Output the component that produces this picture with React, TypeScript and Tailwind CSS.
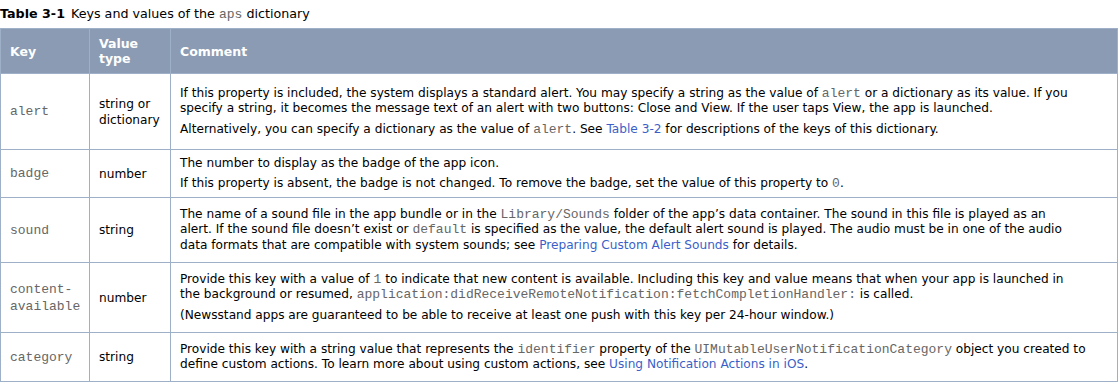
import React from "react";

const sans = "font-['DejaVu_Sans',sans-serif]";
const mono = "font-['Liberation_Mono',monospace] text-[#666666]";

function Code({ children }: { children: React.ReactNode }) {
  return <code className={`${mono} text-[13px]`}>{children}</code>;
}

function Link({ children }: { children: React.ReactNode }) {
  return <span className="text-[#3b5fc8]">{children}</span>;
}

function P({ children, last }: { children: React.ReactNode; last?: boolean }) {
  return <p className={`whitespace-nowrap leading-[15.5px] ${last ? "" : "mb-[5px]"}`}>{children}</p>;
}

const rows = [
  {
    key: "alert",
    type: ["string or", "dictionary"],
    h: "h-[76px]",
    body: (
      <>
        <P>
          If this property is included, the system displays a standard alert. You may specify a string as the value of <Code>alert</Code> or a dictionary as its value. If you
          <br />
          specify a string, it becomes the message text of an alert with two buttons: Close and View. If the user taps View, the app is launched.
        </P>
        <P last>
          Alternatively, you can specify a dictionary as the value of <Code>alert</Code>. See <Link>Table 3-2</Link> for descriptions of the keys of this dictionary.
        </P>
      </>
    ),
  },
  {
    key: "badge",
    type: ["number"],
    h: "h-[48px]",
    body: (
      <>
        <P>The number to display as the badge of the app icon.</P>
        <P last>
          If this property is absent, the badge is not changed. To remove the badge, set the value of this property to <Code>0</Code>.
        </P>
      </>
    ),
  },
  {
    key: "sound",
    type: ["string"],
    h: "h-[65px]",
    body: (
      <P last>
        The name of a sound file in the app bundle or in the <Code>Library/Sounds</Code> folder of the app’s data container. The sound in this file is played as an
        <br />
        alert. If the sound file doesn’t exist or <Code>default</Code> is specified as the value, the default alert sound is played. The audio must be in one of the audio
        <br />
        data formats that are compatible with system sounds; see <Link>Preparing Custom Alert Sounds</Link> for details.
      </P>
    ),
  },
  {
    key: "content-available",
    type: ["number"],
    h: "h-[70px]",
    body: (
      <>
        <P>
          Provide this key with a value of <Code>1</Code> to indicate that new content is available. Including this key and value means that when your app is launched in
          <br />
          the background or resumed, <Code>application:didReceiveRemoteNotification:fetchCompletionHandler:</Code> is called.
        </P>
        <P last>(Newsstand apps are guaranteed to be able to receive at least one push with this key per 24-hour window.)</P>
      </>
    ),
  },
  {
    key: "category",
    type: ["string"],
    h: "h-[49px]",
    body: (
      <P last>
        Provide this key with a string value that represents the <Code>identifier</Code> property of the <Code>UIMutableUserNotificationCategory</Code> object you created to
        <br />
        define custom actions. To learn more about using custom actions, see <Link>Using Notification Actions in iOS</Link>.
      </P>
    ),
  },
];

export default function App() {
  return (
    <div className={`w-[1120px] h-[383px] bg-white text-black text-[12.15px] ${sans}`}>
      <div className="h-[28px] pt-[6px] leading-[16px] text-[12.7px]">
        <span className="font-bold">Table 3-1</span>
        <span className="ml-[6px]">
          Keys and values of the <Code>aps</Code> dictionary
        </span>
      </div>
      <table className="w-[1118px] border-collapse table-fixed">
        <colgroup>
          <col className="w-[89px]" />
          <col className="w-[81px]" />
          <col />
        </colgroup>
        <thead>
          <tr className="h-[45px] bg-[#8a9bb3] text-white font-bold text-[12.5px] leading-[15px]">
            <th className="border border-[#9db0c8] text-left align-middle px-[9px]">Key</th>
            <th className="border border-[#9db0c8] text-left align-middle px-[9px]">
              Value
              <br />
              type
            </th>
            <th className="border border-[#9db0c8] text-left align-middle px-[9px]">Comment</th>
          </tr>
        </thead>
        <tbody>
          {rows.map((r) => (
            <tr key={r.key} className={r.h}>
              <td className="border border-[#9db0c8] align-middle px-[9px] leading-[16px]">
                {r.key === "content-available" ? (
                  <span className={`${mono} text-[13px]`}>
                    content-
                    <br />
                    available
                  </span>
                ) : (
                  <span className={`${mono} text-[13px]`}>{r.key}</span>
                )}
              </td>
              <td className="border border-[#9db0c8] align-middle px-[9px] leading-[16px]">
                {r.type.map((t, i) => (
                  <div key={i}>{t}</div>
                ))}
              </td>
              <td className="border border-[#9db0c8] align-middle px-[9px] py-0">{r.body}</td>
            </tr>
          ))}
        </tbody>
      </table>
    </div>
  );
}
